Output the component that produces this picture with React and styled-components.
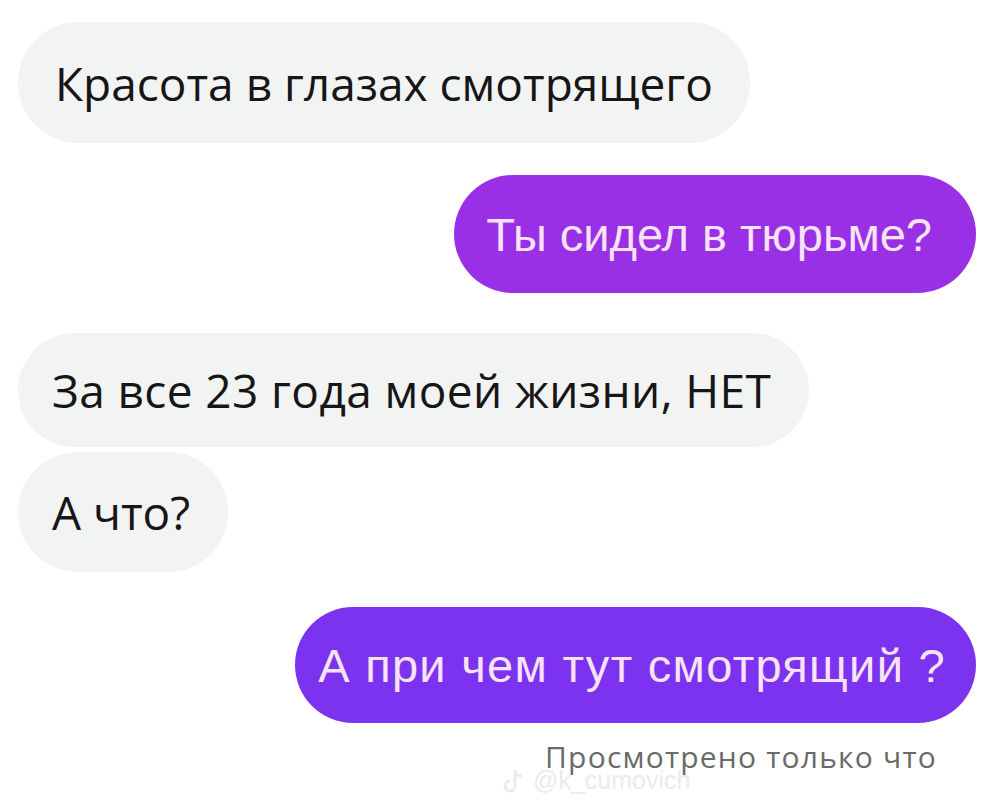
import React from 'react';
import styled, { createGlobalStyle } from 'styled-components';

const GlobalStyle = createGlobalStyle`
  html, body {
    margin: 0;
    padding: 0;
    background: #ffffff;
  }
  body {
    font-family: "Liberation Sans", Arial, sans-serif;
  }
`;

const Thread = styled.div`
  width: 1000px;
  height: 803px;
  box-sizing: border-box;
  padding: 22px 24px 0 18px;
  display: flex;
  flex-direction: column;
  position: relative;
  overflow: hidden;
  background: #ffffff;
`;

const Bubble = styled.div`
  align-self: ${p => (p.$mine ? 'flex-end' : 'flex-start')};
  box-sizing: border-box;
  height: ${p => p.$h}px;
  margin-top: ${p => p.$gap || 0}px;
  padding: ${p => p.$pad || '0 37px'};
  display: flex;
  align-items: center;
  border-radius: 62px;
  white-space: nowrap;
  font-size: ${p => (p.$mine ? 47 : 46)}px;
  letter-spacing: ${p => p.$track || 0}px;
  background: ${p => p.$bg || '#f2f3f3'};
  color: ${p => (p.$mine ? '#f7e2f8' : '#161616')};
  font-family: ${p => (p.$mine ? '"Liberation Sans", Arial, sans-serif' : '"Open Sans", "Noto Sans", sans-serif')};
`;

const Seen = styled.div`
  align-self: flex-end;
  margin-top: 13px;
  margin-right: 39px;
  font-family: "Open Sans", "Noto Sans", sans-serif;
  font-size: 30px;
  color: #6a6a6a;
  letter-spacing: 1.2px;
`;

// faint watermark stamped over the bottom of the thread
const Watermark = styled.div`
  position: absolute;
  left: 503px;
  top: 766px;
  display: flex;
  align-items: center;
  gap: 8px;
  font-family: "Liberation Sans", Arial, sans-serif;
  font-size: 25px;
  color: #ebebeb;
  pointer-events: none;
`;

const messages = [
  { text: 'Красота в глазах смотрящего', h: 121 },
  { text: 'Ты сидел в тюрьме?', h: 118, gap: 32, mine: true, bg: '#9a30e6', pad: '0 44px 0 32px' },
  { text: 'За все 23 года моей жизни, НЕТ', h: 114, gap: 40, pad: '0 38px 0 34px', track: 0.4 },
  { text: 'А что?', h: 120, gap: 5, pad: '0 38px 0 34px' },
  { text: 'А при чем тут смотрящий ?', h: 116, gap: 35, mine: true, bg: '#7c33ef', pad: '0 30px 0 23px', track: 1.3 },
];

const App = () => {
  return (
    <>
      <GlobalStyle />
      <Thread>
        {messages.map((m, i) => (
          <Bubble key={i} $mine={m.mine} $h={m.h} $gap={m.gap} $bg={m.bg} $pad={m.pad} $track={m.track}>
            {m.text}
          </Bubble>
        ))}
        <Seen>Просмотрено только что</Seen>
        <Watermark>
          <svg width="22" height="26" viewBox="0 0 22 26" fill="none" stroke="#ebebeb" strokeWidth="3">
            <path d="M12 2v16a5 5 0 1 1-5-5" />
            <path d="M12 2c0 4 3 6 7 6" />
          </svg>
          <span>@k_cumovich</span>
        </Watermark>
      </Thread>
    </>
  );
};

export default App;
